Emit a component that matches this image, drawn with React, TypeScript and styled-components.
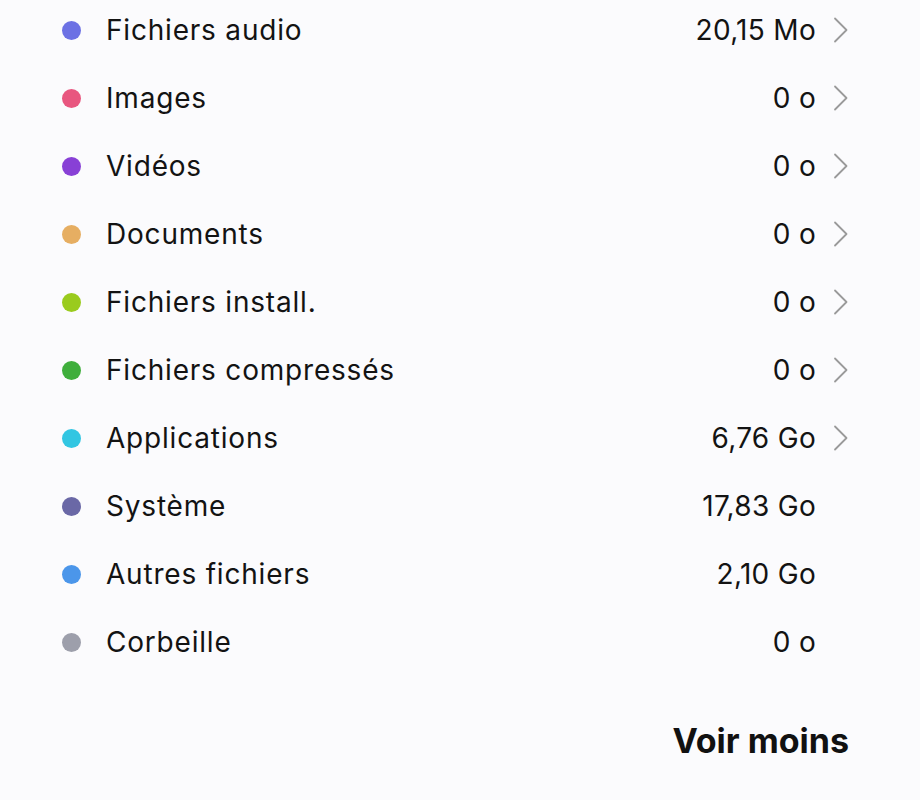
import styled, { createGlobalStyle } from 'styled-components';

const GlobalStyle = createGlobalStyle`
  html, body {
    margin: 0;
    padding: 0;
    background: #fbfbfd;
  }
  body {
    font-family: Inter, "Noto Sans", sans-serif;
    color: #111111;
  }
`;

type Category = {
  label: string;
  color: string;
  size: string;
  link: boolean;
};

const categories: Category[] = [
  { label: 'Fichiers audio', color: '#6c71e4', size: '20,15 Mo', link: true },
  { label: 'Images', color: '#e8567f', size: '0 o', link: true },
  { label: 'Vidéos', color: '#8840d6', size: '0 o', link: true },
  { label: 'Documents', color: '#e6ae62', size: '0 o', link: true },
  { label: 'Fichiers install.', color: '#9acb1e', size: '0 o', link: true },
  { label: 'Fichiers compressés', color: '#3fae3c', size: '0 o', link: true },
  { label: 'Applications', color: '#32c6e2', size: '6,76 Go', link: true },
  { label: 'Système', color: '#6a68a6', size: '17,83 Go', link: false },
  { label: 'Autres fichiers', color: '#4b96ea', size: '2,10 Go', link: false },
  { label: 'Corbeille', color: '#9d9fab', size: '0 o', link: false },
];

const Chevron = () => (
  <svg width="16" height="26" viewBox="0 0 16 26" fill="none">
    <path
      d="M2 1.5 L13.5 13 L2 24.5"
      stroke="#9a9a9a"
      strokeWidth="1.8"
      strokeLinecap="round"
      strokeLinejoin="round"
    />
  </svg>
);

const App = () => {
  return (
    <Page>
      <GlobalStyle />
      <List>
        {categories.map((item) => (
          <Row key={item.label}>
            <Dot color={item.color} />
            <Label>{item.label}</Label>
            <Size>{item.size}</Size>
            <ChevronBox>{item.link && <Chevron />}</ChevronBox>
          </Row>
        ))}
      </List>
      <Footer>
        <MoreButton>Voir moins</MoreButton>
      </Footer>
    </Page>
  );
};

const Page = styled.div`
  width: 920px;
  height: 800px;
  box-sizing: border-box;
  padding: 0 71px 0 62px;
  display: flex;
  flex-direction: column;
  overflow: hidden;
`;

const List = styled.div`
  display: flex;
  flex-direction: column;
`;

const Row = styled.div`
  height: 68px;
  margin-top: -4px;
  margin-bottom: 4px;
  display: flex;
  align-items: center;
`;

const Dot = styled.span`
  width: 19px;
  height: 19px;
  border-radius: 50%;
  background-color: ${(props) => props.color};
  flex-shrink: 0;
`;

const Label = styled.span`
  margin-left: 25px;
  flex: 1;
  font-size: 28px;
  font-weight: 400;
  letter-spacing: 0.8px;
  color: #131313;
`;

const Size = styled.span`
  font-size: 28px;
  font-weight: 400;
  letter-spacing: 0.3px;
  color: #131313;
`;

const ChevronBox = styled.span`
  width: 33px;
  display: flex;
  justify-content: flex-end;
  align-items: center;
`;

const Footer = styled.div`
  display: flex;
  justify-content: flex-end;
  margin-top: 40px;
`;

const MoreButton = styled.span`
  font-size: 34px;
  font-weight: 700;
  letter-spacing: 0px;
  color: #111111;
`;

export default App;
